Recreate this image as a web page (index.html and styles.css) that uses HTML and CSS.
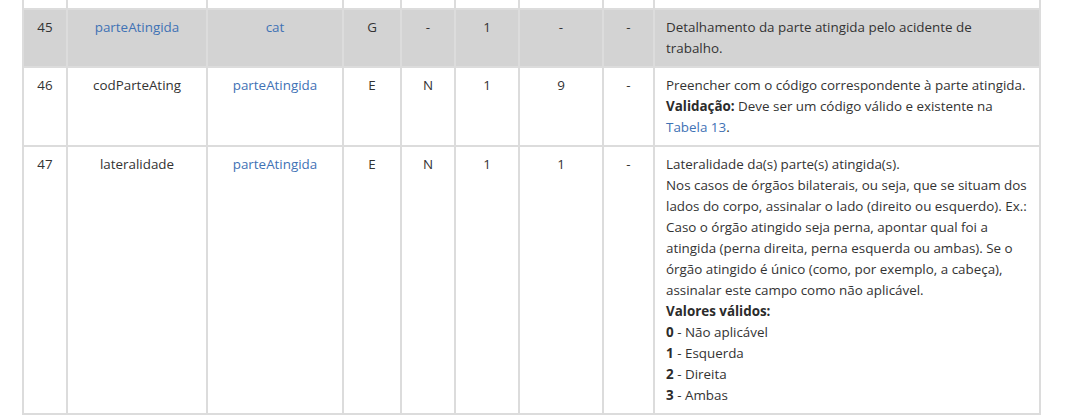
FILE: index.html
```html
<!DOCTYPE html>
<html lang="pt-BR">
<head>
<meta charset="utf-8">
<title>Leiaute</title>
<link rel="stylesheet" href="styles.css">
</head>
<body>
<table class="layout">
  <colgroup>
    <col class="c-seq"><col class="c-name"><col class="c-parent"><col class="c-type"><col class="c-fmt"><col class="c-occ"><col class="c-size"><col class="c-dec"><col class="c-desc">
  </colgroup>
  <tbody>
    <tr class="prev">
      <td></td><td></td><td></td><td></td><td></td><td></td><td></td><td></td><td></td>
    </tr>
    <tr class="group">
      <td>45</td>
      <td><a href="#">parteAtingida</a></td>
      <td><a href="#">cat</a></td>
      <td>G</td>
      <td>-</td>
      <td>1</td>
      <td>-</td>
      <td>-</td>
      <td class="desc">Detalhamento da parte atingida pelo acidente de trabalho.</td>
    </tr>
    <tr>
      <td>46</td>
      <td>codParteAting</td>
      <td><a href="#">parteAtingida</a></td>
      <td>E</td>
      <td>N</td>
      <td>1</td>
      <td>9</td>
      <td>-</td>
      <td class="desc">Preencher com o código correspondente à parte atingida.<br><b>Validação:</b> Deve ser um código válido e existente na <a href="#">Tabela 13</a>.</td>
    </tr>
    <tr>
      <td>47</td>
      <td>lateralidade</td>
      <td><a href="#">parteAtingida</a></td>
      <td>E</td>
      <td>N</td>
      <td>1</td>
      <td>1</td>
      <td>-</td>
      <td class="desc">Lateralidade da(s) parte(s) atingida(s).<br>Nos casos de órgãos bilaterais, ou seja, que se situam dos lados do corpo, assinalar o lado (direito ou esquerdo). Ex.: Caso o órgão atingido seja perna, apontar qual foi a atingida (perna direita, perna esquerda ou ambas). Se o órgão atingido é único (como, por exemplo, a cabeça), assinalar este campo como não aplicável.<br><b>Valores válidos:</b><br><b>0</b> - Não aplicável<br><b>1</b> - Esquerda<br><b>2</b> - Direita<br><b>3</b> - Ambas</td>
    </tr>
  </tbody>
</table>
</body>
</html>
```
FILE: styles.css
```css
html, body {
  margin: 0;
  padding: 0;
  background: #ffffff;
}

body {
  padding-left: 22px;
  font-family: "Open Sans", "Noto Sans", sans-serif;
  font-size: 13.4px;
  line-height: 21px;
  color: #333333;
}

.layout {
  border-collapse: collapse;
  table-layout: fixed;
  width: 1019px;
}

.c-seq { width: 44px; }
.c-name { width: 140px; }
.c-parent { width: 136px; }
.c-type { width: 58px; }
.c-fmt { width: 54px; }
.c-occ { width: 64px; }
.c-size { width: 84px; }
.c-dec { width: 51px; }
.c-desc { width: 386px; }

.layout td {
  border: 2px solid #dcdcdc;
  padding: 7px 11px 7px 11px;
  vertical-align: top;
  text-align: center;
}

.layout td.desc {
  text-align: left;
  padding-right: 12px;
}

.layout tr.prev td {
  border-top: 0;
  height: 8px;
  padding: 0;
}

.layout tr.group td {
  background: #d3d3d3;
}

.layout a {
  color: #3f72b5;
  text-decoration: none;
}

.layout b {
  font-weight: 700;
  color: #2b2b2b;
}
```
